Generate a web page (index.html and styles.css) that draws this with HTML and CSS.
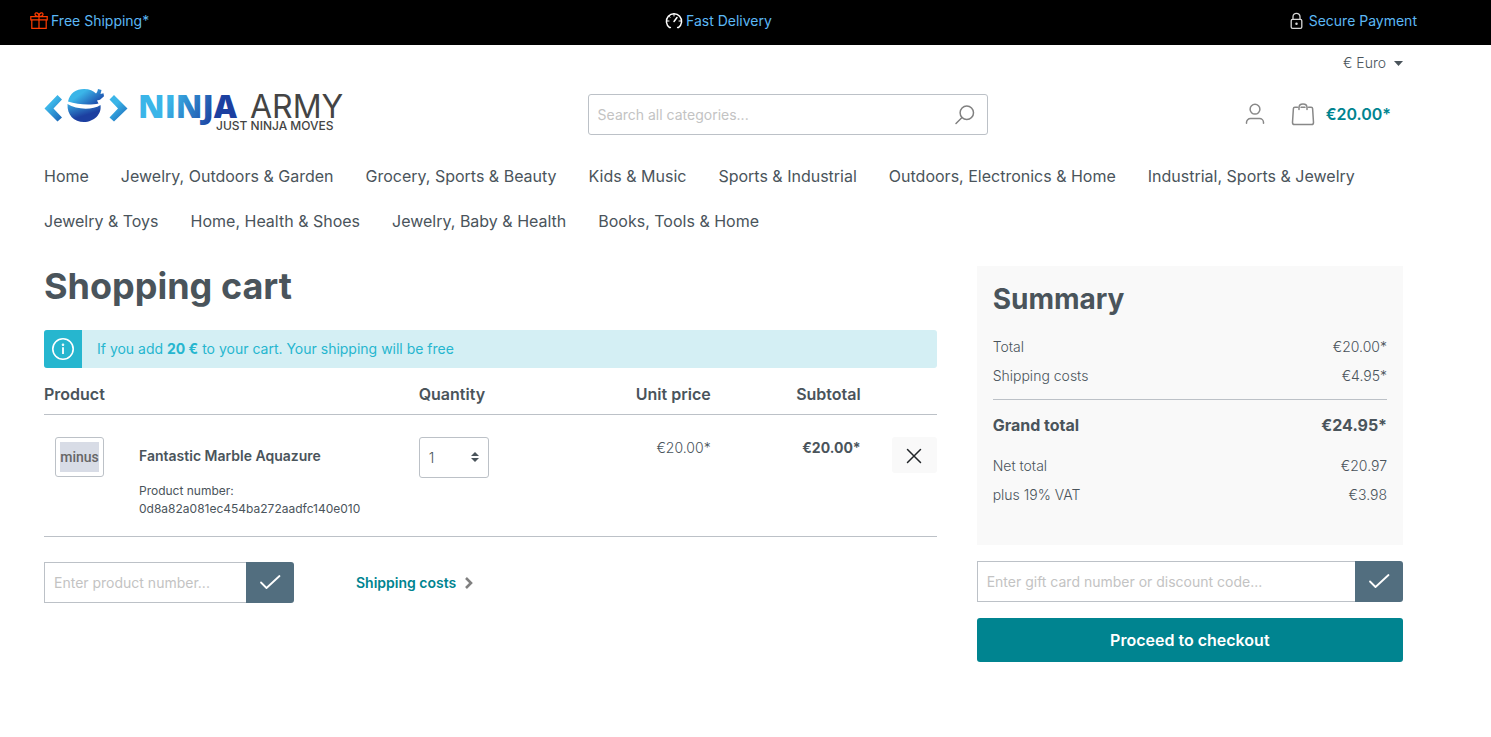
FILE: index.html
```html
<!DOCTYPE html>
<html lang="en">
<head>
<meta charset="utf-8">
<title>Shopping cart</title>
<link rel="stylesheet" href="styles.css">
</head>
<body>
<div class="usp-bar">
  <a class="usp" href="#">
    <svg class="usp-icon usp-gift" width="18" height="18" viewBox="0 0 18 18" fill="none" stroke="#ff3c00" stroke-width="1.2"><path d="M.8 4.6h16.4v3.2H.8zM1.8 7.8h14.4v8.6H1.8zM9 4.6v11.8M9 4.4C6.500 4.400 5 3.500 5 2.300 5 1.200 6 .7 6.900 .9 8.200 1.200 9 2.900 9 4.400zM9 4.400C11.500 4.400 13 3.500 13 2.300 13 1.200 12 .7 11.100 .9 9.800 1.200 9 2.900 9 4.400z"/></svg>
    <span>Free Shipping*</span>
  </a>
  <a class="usp" href="#">
    <svg class="usp-icon" width="18" height="18" viewBox="0 0 18 18" fill="none" stroke="#fff" stroke-width="1.5" stroke-linecap="round"><path d="M5.400 15.600H4.600A7.600 7.600 0 1 1 13.400 15.600H12.600M9 9.500L12 5.500"/><path stroke-width="1" d="M9 2v2M2 9h2M14 9h2M4 4.300l1 1"/></svg>
    <span>Fast Delivery</span>
  </a>
  <a class="usp" href="#">
    <svg class="usp-icon" width="18" height="18" viewBox="0 0 18 18" fill="none" stroke="#d8d8d8" stroke-width="1.300"><rect x="3.200" y="7.300" width="10.600" height="9" rx="1.400"/><path d="M5 7V4.800a3.500 3.500 0 0 1 7 0V7"/><circle cx="8.500" cy="11.700" r=".6" fill="#d8d8d8"/></svg>
    <span>Secure Payment</span>
  </a>
</div>

<div class="container">
  <div class="top-bar">
    <button class="currency" type="button">€ Euro <svg width="9" height="5" viewBox="0 0 9 5"><path d="M0 0h9L4.500 5z" fill="#4a545b"/></svg></button>
  </div>

  <header class="header">
    <a class="logo" href="#" aria-label="Ninja Army">
      <svg width="302" height="50" viewBox="0 0 302 50">
        <defs>
          <linearGradient id="chev" x1="0" y1="0" x2="0.700" y2="1"><stop offset=".4" stop-color="#3bb5e8"/><stop offset="1" stop-color="#1e6fbd"/></linearGradient>
          <linearGradient id="band" x1="0" y1="0" x2="1" y2=".6"><stop offset=".4" stop-color="#3bb5e8"/><stop offset="1" stop-color="#1d4fae"/></linearGradient>
          <linearGradient id="face" x1="0" y1="0" x2=".6" y2="1"><stop offset="0" stop-color="#38a8e0"/><stop offset=".7" stop-color="#1c3fa0"/></linearGradient>
          <linearGradient id="word" gradientUnits="userSpaceOnUse" x1="98" y1="10" x2="172" y2="42"><stop offset=".35" stop-color="#3bb5e8"/><stop offset=".95" stop-color="#1c3fa0"/></linearGradient>
        </defs>
        <path d="M13.500 11L.5 24.500 13.500 37.500 18 33.500 9.500 24.500 18 15.500z" fill="url(#chev)"/>
        <path d="M70 11l13.500 13.500L70 37.500 65.500 33.500 74 24.500 65.500 15.500z" fill="url(#chev)"/>
        <path d="M24 17.500C26 9 32 5 40 5c5.500 0 9.500 1.800 12 4.500 1-1 1.500-2.500 2-4.500l3.500 1-1 4 3-.8 .5 3-4 3.500-3 .8 1.500 3C46 21.500 33 20.500 24 17.500z" fill="url(#band)"/>
        <path d="M23.500 20C32 25.500 48 26.500 56.500 21 58 30 50 38 40 38S23 31 23.500 20z" fill="url(#face)"/>
        <text class="logo-bold" x="94" y="34">NINJA</text>
        <text class="logo-light" x="206" y="34">ARMY</text>
        <text class="logo-tag" x="172" y="46">JUST NINJA MOVES</text>
      </svg>
    </a>
    <form class="search">
      <input class="search-input" type="search" placeholder="Search all categories..." aria-label="Search all categories">
      <button class="search-button" type="button" aria-label="Search"><svg width="22" height="22" viewBox="0 0 22 22" fill="none" stroke="#808080" stroke-width="1.500" stroke-linecap="round"><circle cx="12.800" cy="8.800" r="6.700"/><path d="M8 13.500L2 19.500"/></svg></button>
    </form>
    <div class="actions">
      <button class="icon-button" type="button" aria-label="Your account"><svg width="22" height="22" viewBox="0 0 22 22" fill="none" stroke="#888" stroke-width="1.500" stroke-linecap="round"><circle cx="11" cy="6.200" r="4.900"/><path d="M2.500 20.300V19.500a4 4 0 0 1 4-4h9a4 4 0 0 1 4 4v.8"/></svg></button>
      <a class="cart-link" href="#" aria-label="Cart, €20.00"><svg width="24" height="24" viewBox="0 0 24 24" fill="none" stroke="#888" stroke-width="1.500" stroke-linecap="round"><path d="M6.500 5.200H3.800Q2.500 5.200 2.400 6.500L1.500 20.500Q1.500 22.600 3.500 22.600H20.500Q22.500 22.600 22.500 20.500L21.600 6.500Q21.500 5.200 20.200 5.200H17.500M10 5.200H14M8 7.500V5.500C8 3.500 9.500 2 12 2s4 1.500 4 3.500v2"/></svg><span>€20.00*</span></a>
    </div>
  </header>

  <nav class="nav">
    <a href="#">Home</a>
    <a href="#">Jewelry, Outdoors &amp; Garden</a>
    <a href="#">Grocery, Sports &amp; Beauty</a>
    <a href="#">Kids &amp; Music</a>
    <a href="#">Sports &amp; Industrial</a>
    <a href="#">Outdoors, Electronics &amp; Home</a>
    <a href="#">Industrial, Sports &amp; Jewelry</a>
    <a href="#">Jewelry &amp; Toys</a>
    <a href="#">Home, Health &amp; Shoes</a>
    <a href="#">Jewelry, Baby &amp; Health</a>
    <a href="#">Books, Tools &amp; Home</a>
  </nav>

  <main class="checkout">
    <section class="cart">
      <h1>Shopping cart</h1>
      <div class="alert">
        <div class="alert-icon"><svg width="24" height="24" viewBox="0 0 24 24" fill="none" stroke="#fff" stroke-width="1.600"><circle cx="12" cy="12" r="10.200"/><path d="M12 10.300v6.700" stroke-width="1.800"/><circle cx="12" cy="7.700" r=".5"/></svg></div>
        <p>If you add <b>20 €</b> to your cart. Your shipping will be free</p>
      </div>
      <table class="items">
        <colgroup><col><col class="col-quantity"><col class="col-price"><col class="col-price"><col class="col-remove"></colgroup>
        <thead>
          <tr><th>Product</th><th>Quantity</th><th class="num">Unit price</th><th class="num">Subtotal</th><th></th></tr>
        </thead>
        <tbody>
          <tr>
            <td>
              <div class="product">
                <a class="thumb" href="#"><span>minus</span></a>
                <div>
                  <a class="product-name" href="#">Fantastic Marble Aquazure</a>
                  <div class="product-number">Product number:<br>0d8a82a081ec454ba272aadfc140e010</div>
                </div>
              </div>
            </td>
            <td>
              <div class="quantity">
                <select aria-label="Quantity"><option>1</option><option>2</option><option>3</option></select>
                <svg class="quantity-arrows" width="8" height="10" viewBox="0 0 8 10" fill="#4a545b"><path d="M0 4L4 0l4 4zM0 6h8L4 10z"/></svg>
              </div>
            </td>
            <td class="num price">€20.00*</td>
            <td class="num price total">€20.00*</td>
            <td class="num"><button class="remove" type="button" aria-label="Remove product"><svg width="16" height="16" viewBox="0 0 16 16" stroke="#212529" stroke-width="1.500" stroke-linecap="round"><path d="M1.500 1.500l13 13M14.500 1.500l-13 13"/></svg></button></td>
          </tr>
        </tbody>
      </table>
      <div class="cart-tools">
        <form class="code-form add-product">
          <input type="text" placeholder="Enter product number..." aria-label="Product number">
          <button type="button" aria-label="Add product"><svg width="22" height="18" viewBox="0 0 22 18" fill="none" stroke="#fff" stroke-width="1.800" stroke-linecap="round" stroke-linejoin="round"><path d="M2 8.500l5.500 5.500L20.500 2"/></svg></button>
        </form>
        <a class="shipping-link" href="#">Shipping costs <svg width="10" height="12" viewBox="0 0 10 12" fill="none" stroke="#808080" stroke-width="2.600"><path d="M2 1l5 5-5 5"/></svg></a>
      </div>
    </section>

    <aside class="sidebar">
      <div class="summary">
        <h2>Summary</h2>
        <dl class="rows">
          <div><dt>Total</dt><dd>€20.00*</dd></div>
          <div><dt>Shipping costs</dt><dd>€4.95*</dd></div>
          <div class="grand"><dt>Grand total</dt><dd>€24.95*</dd></div>
          <div><dt>Net total</dt><dd>€20.97</dd></div>
          <div><dt>plus 19% VAT</dt><dd>€3.98</dd></div>
        </dl>
      </div>
      <form class="code-form">
        <input type="text" placeholder="Enter gift card number or discount code..." aria-label="Gift card number or discount code">
        <button type="button" aria-label="Redeem code"><svg width="22" height="18" viewBox="0 0 22 18" fill="none" stroke="#fff" stroke-width="1.800" stroke-linecap="round" stroke-linejoin="round"><path d="M2 8.500l5.500 5.500L20.500 2"/></svg></button>
      </form>
      <button class="proceed" type="button">Proceed to checkout</button>
    </aside>
  </main>
</div>
</body>
</html>
```
FILE: styles.css
```css
* { box-sizing: border-box; }

body {
  margin: 0;
  background: #fff;
  color: #4a545b;
  font-family: Inter, "Liberation Sans", sans-serif;
  font-size: 14px;
  font-weight: 300;
  line-height: 20px;
}

a { color: inherit; text-decoration: none; }
button, input, select { font: inherit; color: inherit; }
button { border: 0; background: none; padding: 0; cursor: pointer; }
h1, h2, p, dl, dd { margin: 0; }
svg { display: block; }

.usp-bar {
  display: flex;
  justify-content: space-between;
  height: 45px;
  padding: 11px 74px 0 30px;
  background: #000;
  color: #5cb8f5;
  font-weight: 400;
}
.usp { display: flex; gap: 3px; height: 20px; align-items: center; }

.container { padding: 0 88px 0 44px; }

.top-bar { display: flex; justify-content: flex-end; padding-top: 8px; }
.currency { display: flex; align-items: center; gap: 8px; }

.header {
  display: grid;
  grid-template-columns: 40% 400px 1fr;
  align-items: start;
  padding-top: 11px;
}
.logo-bold { font-family: "Open Sans", "Noto Sans", sans-serif; font-size: 32px; font-weight: 800; fill: url(#word); }
.logo-light { font-size: 32px; font-weight: 400; fill: #444; }
.logo-tag { font-size: 12px; font-weight: 500; fill: #444; }

.search {
  display: flex;
  height: 41px;
  margin-top: 10px;
  border: 1px solid #bcc1c7;
  border-radius: 3px;
}
.search-input {
  flex: 1;
  min-width: 0;
  padding: 0 9px;
  border: 0;
  background: none;
  outline: 0;
  font-weight: 400;
}
.search-button { display: grid; place-items: center; width: 44px; }
::placeholder { color: #c3c3c3; opacity: 1; }

.actions {
  display: flex;
  justify-content: flex-end;
  align-items: center;
  gap: 25px;
  margin-top: 18px;
  padding-right: 12px;
}
.cart-link {
  display: flex;
  align-items: center;
  gap: 11px;
  color: #008490;
  font-size: 16px;
  font-weight: 600;
}

.nav {
  display: flex;
  flex-wrap: wrap;
  gap: 21px 32px;
  padding-top: 29px;
  font-size: 16px;
  font-weight: 400;
  line-height: 24px;
}

.checkout {
  display: grid;
  grid-template-columns: calc((100% + 40px) * 2 / 3 - 40px) 1fr;
  gap: 40px;
  align-items: start;
  padding-top: 33px;
}
h1 { font-size: 36px; font-weight: 700; line-height: 40px; }
h2 { font-size: 28px; font-weight: 700; line-height: 34px; }
b { font-weight: 700; }

.alert {
  display: flex;
  margin-top: 24px;
  border-radius: 3px;
  overflow: hidden;
  background: #d4eff4;
  color: #26b6cf;
  font-weight: 400;
}
.alert-icon { display: grid; place-items: center; width: 38px; height: 38px; background: #26b6cf; }
.alert p { padding: 9px 15px; }

.items { width: 100%; table-layout: fixed; border-collapse: collapse; text-align: left; }
.col-quantity { width: 142px; }
.col-price { width: 150px; }
.col-remove { width: 76px; }
.items tr { border-bottom: 1px solid #bcc1c7; }
.items th { padding: 14px 0 8px; font-size: 16px; font-weight: 600; line-height: 24px; }
.items td { padding: 22px 0 18px; vertical-align: top; }
.items .num { text-align: right; }
.items .price { padding-top: 23px; }
.items .total { font-weight: 700; }

.product { display: grid; grid-template-columns: 49px 1fr; gap: 35px; padding-left: 11px; }
.thumb {
  height: 40px;
  padding: 4px;
  border: 1px solid #bcc1c7;
  border-radius: 3px;
}
.thumb span {
  display: grid;
  place-items: center;
  height: 30px;
  background: #d8dce6;
  color: #666;
  font-family: Roboto, sans-serif;
  font-size: 14px;
  font-weight: 500;
}
.product-name { display: block; padding-top: 9px; font-weight: 600; }
.product-number { padding-top: 16px; font-size: 12px; font-weight: 400; line-height: 18px; }

.quantity { position: relative; width: 70px; }
.quantity select {
  width: 100%;
  height: 41px;
  padding: 0 9px;
  border: 1px solid #bcc1c7;
  border-radius: 3px;
  background: #fff;
  appearance: none;
}
.quantity-arrows { position: absolute; top: 15px; right: 10px; pointer-events: none; }

.remove { width: 45px; height: 36px; border-radius: 3px; background: #f9f9f9; }
.remove svg { margin: 2px auto 0; }

.cart-tools { display: flex; align-items: center; gap: 62px; padding-top: 25px; }
.add-product { width: 250px; }
.code-form { display: flex; height: 41px; }
.code-form input {
  flex: 1;
  min-width: 0;
  padding: 0 9px;
  border: 1px solid #bcc1c7;
  border-right: 0;
  border-radius: 0;
  outline: 0;
  font-weight: 400;
}
.code-form button {
  display: grid;
  place-items: center;
  width: 48px;
  border-radius: 0 3px 3px 0;
  background: #526e7f;
}
.shipping-link { display: flex; align-items: center; gap: 8px; color: #008490; font-weight: 600; }

.sidebar { display: grid; gap: 16px; }
.summary { padding: 16px 16px 31px; background: #f9f9f9; }
.rows { padding-top: 21px; }
.rows div { display: flex; justify-content: space-between; padding-bottom: 9px; }
.rows .grand {
  margin-top: 4px;
  padding: 15px 0 21px;
  border-top: 1px solid #bcc1c7;
  font-size: 16px;
  font-weight: 700;
}
.proceed {
  height: 44px;
  border-radius: 3px;
  background: #008490;
  color: #fff;
  font-size: 16px;
  font-weight: 600;
}
```
